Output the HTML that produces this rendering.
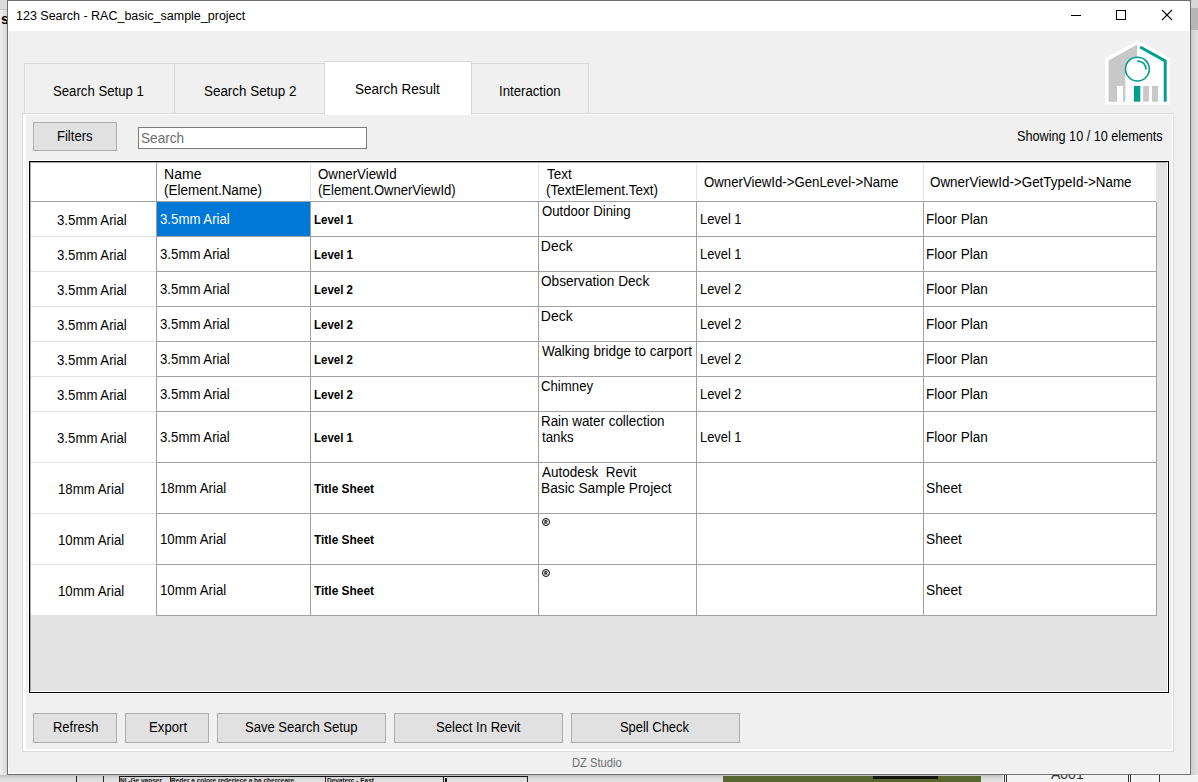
<!DOCTYPE html>
<html><head><meta charset="utf-8"><style>
*{margin:0;padding:0;box-sizing:border-box}
html,body{width:1198px;height:782px;overflow:hidden;background:#e6e6e6;font-family:"Liberation Sans",sans-serif;color:#000}
.a{position:absolute}
.t{position:absolute;white-space:pre;transform-origin:0 0}
.btn{position:absolute;background:#e1e1e1;border:1px solid #adadad}
</style></head><body>

<div class="a" style="left:0;top:0;width:7px;height:9px;background:#dcdcdc"></div>
<div class="a" style="left:0;top:9px;width:7px;height:1px;background:#c4c4c4"></div>
<div class="a" style="left:0;top:10px;width:7px;height:765px;background:linear-gradient(to right,#f0f0f0,#d8d8d8)"></div>
<div class="t" style="left:1px;top:11px;font-weight:bold;font-size:14px;line-height:16px">s</div>
<div class="a" style="left:1191px;top:0;width:7px;height:8px;background:#d8d8d8"></div>
<div class="a" style="left:1191px;top:8px;width:7px;height:22px;background:#b6b6b6"></div>
<div class="a" style="left:1191px;top:30px;width:7px;height:752px;background:linear-gradient(to right,#cccccc,#d4d4d4 30%,#e2e2e2)"></div>
<div class="a" style="left:0;top:775px;width:1198px;height:7px;background:linear-gradient(to bottom,#c0c0c0,#d8d8d8 40%,#e4e4e4)"></div>
<div class="a" style="left:723px;top:776px;width:258px;height:6px;background:#58672f"></div>
<div class="a" style="left:873px;top:776px;width:65px;height:3px;background:#151510"></div>
<div class="a" style="left:76px;top:776px;width:1px;height:6px;background:#222"></div>
<div class="a" style="left:103px;top:776px;width:1px;height:6px;background:#222"></div>
<div class="a" style="left:119px;top:776px;width:1px;height:6px;background:#222"></div>
<div class="a" style="left:170px;top:776px;width:1px;height:6px;background:#222"></div>
<div class="a" style="left:325px;top:776px;width:1px;height:6px;background:#222"></div>
<div class="a" style="left:443px;top:776px;width:1px;height:6px;background:#222"></div>
<div class="a" style="left:527px;top:776px;width:1px;height:6px;background:#222"></div>
<div class="a" style="left:119px;top:776px;width:409px;height:1px;background:#111"></div>
<div class="a" style="left:445px;top:778px;width:2px;height:4px;background:#111"></div>
<div class="t" style="left:120px;top:777px;font-size:6.5px;line-height:7px;font-weight:bold;color:#111">Nl -Ge vanser</div>
<div class="t" style="left:171px;top:777px;font-size:6.5px;line-height:7px;font-weight:bold;color:#111">Reder a colore rederiece a ba cherceare.</div>
<div class="t" style="left:327px;top:777px;font-size:6.5px;line-height:7px;font-weight:bold;color:#111">Devaterc - East</div>
<div class="a" style="left:1003px;top:775px;width:195px;height:7px;background:#f4f4f4"></div>
<div class="a" style="left:1004px;top:775px;width:1px;height:7px;background:#333"></div>
<div class="a" style="left:1006px;top:775px;width:1px;height:7px;background:#333"></div>
<div class="a" style="left:1128px;top:775px;width:1px;height:7px;background:#333"></div>
<div class="a" style="left:1130px;top:775px;width:1px;height:7px;background:#333"></div>
<div class="a" style="left:1159px;top:775px;width:1px;height:7px;background:#333"></div>
<div class="t" style="left:1051px;top:766px;font-size:14px;line-height:16px;color:#333">A001</div>
<div class="a" style="left:7px;top:0;width:1184px;height:775px;border:1px solid #6e6e6e;background:#f8f8f8"></div>
<div class="a" style="left:9px;top:31px;width:1180px;height:742px;background:#f0f0f0"></div>
<div class="a" style="left:8px;top:1px;width:1182px;height:30px;background:#fff"></div>
<div class="a" style="left:1071px;top:15px;width:10px;height:1px;background:#000"></div>
<div class="a" style="left:1116px;top:10px;width:10px;height:10px;border:1px solid #000"></div>
<svg class="a" style="left:1161px;top:9px" width="12" height="12" viewBox="0 0 12 12"><path d="M1 1L11 11M11 1L1 11" stroke="#000" stroke-width="1.1"/></svg>
<svg class="a" style="left:1100px;top:36px" width="75" height="75" viewBox="0 0 75 75">
<polygon points="38,4.3 69.8,22 69.8,68.6 5.3,68.6 5.3,22" fill="#fff"/>
<path d="M8.6,24.4 L37,8.4 L37,24 L25.4,36 L25.4,65.7 L8.6,65.7 Z" fill="#c8c8c8"/>
<rect x="17" y="49.9" width="6" height="15.8" fill="#fff"/>
<circle cx="37.4" cy="33.1" r="11.9" fill="#fff" stroke="#00a08f" stroke-width="1.6"/>
<path d="M37.9,25.1 A8,8 0 0 1 46,33.1" fill="none" stroke="#00a08f" stroke-width="1.6" stroke-linecap="round"/>
<path d="M40.1,11 L65.2,24.9 L65.2,65.7" fill="none" stroke="#00a08f" stroke-width="3"/>
<rect x="34" y="49.9" width="6.3" height="15.8" fill="#00a08f"/>
<rect x="43.1" y="49.9" width="5.8" height="15.8" fill="#c8c8c8"/>
<rect x="52" y="49.9" width="6" height="15.8" fill="#c8c8c8"/>
</svg>
<div class="a" style="left:22px;top:113px;width:1152px;height:639px;border:1px solid #dadada;background:#fff"></div>
<div class="a" style="left:26px;top:115px;width:1146px;height:634px;background:#f0f0f0"></div>
<div class="a" style="left:24px;top:63px;width:151px;height:50px;border:1px solid #d9d9d9;border-bottom:none;background:#f0f0f0"></div>
<div class="a" style="left:174px;top:63px;width:151px;height:50px;border:1px solid #d9d9d9;border-bottom:none;background:#f0f0f0"></div>
<div class="a" style="left:471px;top:63px;width:118px;height:50px;border:1px solid #d9d9d9;border-bottom:none;background:#f0f0f0"></div>
<div class="a" style="left:324px;top:61px;width:148px;height:54px;border:1px solid #d9d9d9;border-bottom:none;background:#fff"></div>
<div class="btn" style="left:33px;top:122px;width:84px;height:29px"></div>
<div class="a" style="left:138px;top:127px;width:229px;height:22px;border:1px solid #7a7a7a;background:#fff"></div>
<div class="a" style="left:28px;top:160px;width:1142px;height:534px;background:#fff"></div>
<div class="a" style="left:29px;top:161px;width:1140px;height:532px;border:1px solid #000;background:#fff"></div>
<div class="a" style="left:30px;top:162px;width:1137px;height:529px;background:#e3e3e3"></div>
<div class="a" style="left:30px;top:162px;width:1126px;height:453px;background:#fff"></div>
<div class="a" style="left:30px;top:201px;width:1126px;height:1px;background:#a0a0a0"></div>
<div class="a" style="left:156px;top:162px;width:1px;height:39px;background:#a0a0a0"></div>
<div class="a" style="left:310px;top:164px;width:1px;height:36px;background:#e3e3e3"></div>
<div class="a" style="left:538px;top:164px;width:1px;height:36px;background:#e3e3e3"></div>
<div class="a" style="left:696px;top:164px;width:1px;height:36px;background:#e3e3e3"></div>
<div class="a" style="left:923px;top:164px;width:1px;height:36px;background:#e3e3e3"></div>
<div class="a" style="left:1156px;top:164px;width:1px;height:36px;background:#e3e3e3"></div>
<div class="a" style="left:156px;top:202px;width:1px;height:414px;background:#a0a0a0"></div>
<div class="a" style="left:310px;top:202px;width:1px;height:414px;background:#a0a0a0"></div>
<div class="a" style="left:538px;top:202px;width:1px;height:414px;background:#a0a0a0"></div>
<div class="a" style="left:696px;top:202px;width:1px;height:414px;background:#a0a0a0"></div>
<div class="a" style="left:923px;top:202px;width:1px;height:414px;background:#a0a0a0"></div>
<div class="a" style="left:1156px;top:202px;width:1px;height:414px;background:#a0a0a0"></div>
<div class="a" style="left:30px;top:236px;width:126px;height:1px;background:#e3e3e3"></div>
<div class="a" style="left:157px;top:236px;width:1000px;height:1px;background:#a0a0a0"></div>
<div class="a" style="left:30px;top:271px;width:126px;height:1px;background:#e3e3e3"></div>
<div class="a" style="left:157px;top:271px;width:1000px;height:1px;background:#a0a0a0"></div>
<div class="a" style="left:30px;top:306px;width:126px;height:1px;background:#e3e3e3"></div>
<div class="a" style="left:157px;top:306px;width:1000px;height:1px;background:#a0a0a0"></div>
<div class="a" style="left:30px;top:341px;width:126px;height:1px;background:#e3e3e3"></div>
<div class="a" style="left:157px;top:341px;width:1000px;height:1px;background:#a0a0a0"></div>
<div class="a" style="left:30px;top:376px;width:126px;height:1px;background:#e3e3e3"></div>
<div class="a" style="left:157px;top:376px;width:1000px;height:1px;background:#a0a0a0"></div>
<div class="a" style="left:30px;top:411px;width:126px;height:1px;background:#e3e3e3"></div>
<div class="a" style="left:157px;top:411px;width:1000px;height:1px;background:#a0a0a0"></div>
<div class="a" style="left:30px;top:462px;width:126px;height:1px;background:#e3e3e3"></div>
<div class="a" style="left:157px;top:462px;width:1000px;height:1px;background:#a0a0a0"></div>
<div class="a" style="left:30px;top:513px;width:126px;height:1px;background:#e3e3e3"></div>
<div class="a" style="left:157px;top:513px;width:1000px;height:1px;background:#a0a0a0"></div>
<div class="a" style="left:30px;top:564px;width:126px;height:1px;background:#e3e3e3"></div>
<div class="a" style="left:157px;top:564px;width:1000px;height:1px;background:#a0a0a0"></div>
<div class="a" style="left:30px;top:615px;width:126px;height:1px;background:#e3e3e3"></div>
<div class="a" style="left:157px;top:615px;width:1000px;height:1px;background:#a0a0a0"></div>
<div class="a" style="left:157px;top:202px;width:153px;height:34px;background:#0078d7"></div>
<div class="a" style="left:30px;top:162px;width:1px;height:529px;background:#a8a8a8"></div>
<div class="a" style="left:30px;top:162px;width:1137px;height:1px;background:#a8a8a8"></div>
<div class="btn" style="left:33px;top:713px;width:84px;height:30px"></div>
<div class="btn" style="left:125px;top:713px;width:84px;height:30px"></div>
<div class="btn" style="left:217px;top:713px;width:169px;height:30px"></div>
<div class="btn" style="left:394px;top:713px;width:169px;height:30px"></div>
<div class="btn" style="left:571px;top:713px;width:169px;height:30px"></div>
<div class="t" style="left:16.00px;top:8px;font-size:12.5px;line-height:16px;font-weight:normal;color:#000;transform:scaleX(1.0000)">123 Search - RAC_basic_sample_project</div>
<div class="t" style="left:53.36px;top:83px;font-size:14px;line-height:16px;font-weight:normal;color:#000;transform:scaleX(0.9416)">Search Setup 1</div>
<div class="t" style="left:204.04px;top:83px;font-size:14px;line-height:16px;font-weight:normal;color:#000;transform:scaleX(0.9579)">Search Setup 2</div>
<div class="t" style="left:355.34px;top:81px;font-size:14px;line-height:16px;font-weight:normal;color:#000;transform:scaleX(0.9644)">Search Result</div>
<div class="t" style="left:499.36px;top:83px;font-size:14px;line-height:16px;font-weight:normal;color:#000;transform:scaleX(0.9422)">Interaction</div>
<div class="t" style="left:56.77px;top:128px;font-size:14px;line-height:16px;font-weight:normal;color:#000;transform:scaleX(0.9324)">Filters</div>
<div class="t" style="left:140.53px;top:130px;font-size:14px;line-height:16px;font-weight:normal;color:#6d6d6d;transform:scaleX(0.9721)">Search</div>
<div class="t" style="left:1017.40px;top:128px;font-size:14px;line-height:16px;font-weight:normal;color:#000;transform:scaleX(0.9044)">Showing 10 / 10 elements</div>
<div class="t" style="left:163.50px;top:166px;font-size:14px;line-height:16px;font-weight:normal;color:#000;transform:scaleX(1.0028)">Name</div>
<div class="t" style="left:163.54px;top:182px;font-size:14px;line-height:16px;font-weight:normal;color:#000;transform:scaleX(0.9620)">(Element.Name)</div>
<div class="t" style="left:317.75px;top:166px;font-size:14px;line-height:16px;font-weight:normal;color:#000;transform:scaleX(0.9481)">OwnerViewId</div>
<div class="t" style="left:317.77px;top:182px;font-size:14px;line-height:16px;font-weight:normal;color:#000;transform:scaleX(0.9329)">(Element.OwnerViewId)</div>
<div class="t" style="left:547.30px;top:166px;font-size:14px;line-height:16px;font-weight:normal;color:#000;transform:scaleX(0.9615)">Text</div>
<div class="t" style="left:546.33px;top:182px;font-size:14px;line-height:16px;font-weight:normal;color:#000;transform:scaleX(0.9667)">(TextElement.Text)</div>
<div class="t" style="left:703.81px;top:174px;font-size:14px;line-height:16px;font-weight:normal;color:#000;transform:scaleX(0.9441)">OwnerViewId-&gt;GenLevel-&gt;Name</div>
<div class="t" style="left:930.04px;top:174px;font-size:14px;line-height:16px;font-weight:normal;color:#000;transform:scaleX(0.9569)">OwnerViewId-&gt;GetTypeId-&gt;Name</div>
<div class="t" style="left:57.46px;top:212px;font-size:14px;line-height:16px;font-weight:normal;color:#000;transform:scaleX(0.9444)">3.5mm Arial</div>
<div class="t" style="left:160.06px;top:211px;font-size:14px;line-height:16px;font-weight:normal;color:#fff;transform:scaleX(0.9444)">3.5mm Arial</div>
<div class="t" style="left:313.88px;top:212px;font-size:12.5px;line-height:16px;font-weight:bold;color:#000;transform:scaleX(0.9171)">Level 1</div>
<div class="t" style="left:541.86px;top:203px;font-size:14px;line-height:16px;font-weight:normal;color:#000;transform:scaleX(0.9403)">Outdoor Dining</div>
<div class="t" style="left:699.78px;top:211px;font-size:14px;line-height:16px;font-weight:normal;color:#000;transform:scaleX(0.9182)">Level 1</div>
<div class="t" style="left:926.33px;top:211px;font-size:14px;line-height:16px;font-weight:normal;color:#000;transform:scaleX(0.9677)">Floor Plan</div>
<div class="t" style="left:57.46px;top:247px;font-size:14px;line-height:16px;font-weight:normal;color:#000;transform:scaleX(0.9444)">3.5mm Arial</div>
<div class="t" style="left:160.06px;top:246px;font-size:14px;line-height:16px;font-weight:normal;color:#000;transform:scaleX(0.9444)">3.5mm Arial</div>
<div class="t" style="left:313.88px;top:247px;font-size:12.5px;line-height:16px;font-weight:bold;color:#000;transform:scaleX(0.9171)">Level 1</div>
<div class="t" style="left:540.80px;top:238px;font-size:14px;line-height:16px;font-weight:normal;color:#000;transform:scaleX(1.0000)">Deck</div>
<div class="t" style="left:699.78px;top:246px;font-size:14px;line-height:16px;font-weight:normal;color:#000;transform:scaleX(0.9182)">Level 1</div>
<div class="t" style="left:926.33px;top:246px;font-size:14px;line-height:16px;font-weight:normal;color:#000;transform:scaleX(0.9677)">Floor Plan</div>
<div class="t" style="left:57.46px;top:282px;font-size:14px;line-height:16px;font-weight:normal;color:#000;transform:scaleX(0.9444)">3.5mm Arial</div>
<div class="t" style="left:160.06px;top:281px;font-size:14px;line-height:16px;font-weight:normal;color:#000;transform:scaleX(0.9444)">3.5mm Arial</div>
<div class="t" style="left:313.88px;top:282px;font-size:12.5px;line-height:16px;font-weight:bold;color:#000;transform:scaleX(0.9171)">Level 2</div>
<div class="t" style="left:540.83px;top:273px;font-size:14px;line-height:16px;font-weight:normal;color:#000;transform:scaleX(0.9727)">Observation Deck</div>
<div class="t" style="left:699.78px;top:281px;font-size:14px;line-height:16px;font-weight:normal;color:#000;transform:scaleX(0.9182)">Level 2</div>
<div class="t" style="left:926.33px;top:281px;font-size:14px;line-height:16px;font-weight:normal;color:#000;transform:scaleX(0.9677)">Floor Plan</div>
<div class="t" style="left:57.46px;top:317px;font-size:14px;line-height:16px;font-weight:normal;color:#000;transform:scaleX(0.9444)">3.5mm Arial</div>
<div class="t" style="left:160.06px;top:316px;font-size:14px;line-height:16px;font-weight:normal;color:#000;transform:scaleX(0.9444)">3.5mm Arial</div>
<div class="t" style="left:313.88px;top:317px;font-size:12.5px;line-height:16px;font-weight:bold;color:#000;transform:scaleX(0.9171)">Level 2</div>
<div class="t" style="left:540.80px;top:308px;font-size:14px;line-height:16px;font-weight:normal;color:#000;transform:scaleX(1.0000)">Deck</div>
<div class="t" style="left:699.78px;top:316px;font-size:14px;line-height:16px;font-weight:normal;color:#000;transform:scaleX(0.9182)">Level 2</div>
<div class="t" style="left:926.33px;top:316px;font-size:14px;line-height:16px;font-weight:normal;color:#000;transform:scaleX(0.9677)">Floor Plan</div>
<div class="t" style="left:57.46px;top:352px;font-size:14px;line-height:16px;font-weight:normal;color:#000;transform:scaleX(0.9444)">3.5mm Arial</div>
<div class="t" style="left:160.06px;top:351px;font-size:14px;line-height:16px;font-weight:normal;color:#000;transform:scaleX(0.9444)">3.5mm Arial</div>
<div class="t" style="left:313.88px;top:352px;font-size:12.5px;line-height:16px;font-weight:bold;color:#000;transform:scaleX(0.9171)">Level 2</div>
<div class="t" style="left:541.80px;top:343px;font-size:14px;line-height:16px;font-weight:normal;color:#000;transform:scaleX(0.9665)">Walking bridge to carport</div>
<div class="t" style="left:699.78px;top:351px;font-size:14px;line-height:16px;font-weight:normal;color:#000;transform:scaleX(0.9182)">Level 2</div>
<div class="t" style="left:926.33px;top:351px;font-size:14px;line-height:16px;font-weight:normal;color:#000;transform:scaleX(0.9677)">Floor Plan</div>
<div class="t" style="left:57.46px;top:387px;font-size:14px;line-height:16px;font-weight:normal;color:#000;transform:scaleX(0.9444)">3.5mm Arial</div>
<div class="t" style="left:160.06px;top:386px;font-size:14px;line-height:16px;font-weight:normal;color:#000;transform:scaleX(0.9444)">3.5mm Arial</div>
<div class="t" style="left:313.88px;top:387px;font-size:12.5px;line-height:16px;font-weight:bold;color:#000;transform:scaleX(0.9171)">Level 2</div>
<div class="t" style="left:540.86px;top:378px;font-size:14px;line-height:16px;font-weight:normal;color:#000;transform:scaleX(0.9426)">Chimney</div>
<div class="t" style="left:699.78px;top:386px;font-size:14px;line-height:16px;font-weight:normal;color:#000;transform:scaleX(0.9182)">Level 2</div>
<div class="t" style="left:926.33px;top:386px;font-size:14px;line-height:16px;font-weight:normal;color:#000;transform:scaleX(0.9677)">Floor Plan</div>
<div class="t" style="left:57.46px;top:430px;font-size:14px;line-height:16px;font-weight:normal;color:#000;transform:scaleX(0.9444)">3.5mm Arial</div>
<div class="t" style="left:160.06px;top:429px;font-size:14px;line-height:16px;font-weight:normal;color:#000;transform:scaleX(0.9444)">3.5mm Arial</div>
<div class="t" style="left:313.88px;top:430px;font-size:12.5px;line-height:16px;font-weight:bold;color:#000;transform:scaleX(0.9171)">Level 1</div>
<div class="t" style="left:540.84px;top:413px;font-size:14px;line-height:16px;font-weight:normal;color:#000;transform:scaleX(0.9563)">Rain water collection</div>
<div class="t" style="left:541.80px;top:429px;font-size:14px;line-height:16px;font-weight:normal;color:#000;transform:scaleX(0.9455)">tanks</div>
<div class="t" style="left:699.78px;top:429px;font-size:14px;line-height:16px;font-weight:normal;color:#000;transform:scaleX(0.9182)">Level 1</div>
<div class="t" style="left:926.33px;top:429px;font-size:14px;line-height:16px;font-weight:normal;color:#000;transform:scaleX(0.9677)">Floor Plan</div>
<div class="t" style="left:58.25px;top:481px;font-size:14px;line-height:16px;font-weight:normal;color:#000;transform:scaleX(0.9456)">18mm Arial</div>
<div class="t" style="left:160.05px;top:480px;font-size:14px;line-height:16px;font-weight:normal;color:#000;transform:scaleX(0.9456)">18mm Arial</div>
<div class="t" style="left:314.20px;top:481px;font-size:12.5px;line-height:16px;font-weight:bold;color:#000;transform:scaleX(0.9524)">Title Sheet</div>
<div class="t" style="left:541.80px;top:464px;font-size:14px;line-height:16px;font-weight:normal;color:#000;transform:scaleX(0.9633)">Autodesk&nbsp; Revit</div>
<div class="t" style="left:540.82px;top:480px;font-size:14px;line-height:16px;font-weight:normal;color:#000;transform:scaleX(0.9818)">Basic Sample Project</div>
<div class="t" style="left:926.32px;top:480px;font-size:14px;line-height:16px;font-weight:normal;color:#000;transform:scaleX(0.9806)">Sheet</div>
<div class="t" style="left:58.25px;top:532px;font-size:14px;line-height:16px;font-weight:normal;color:#000;transform:scaleX(0.9456)">10mm Arial</div>
<div class="t" style="left:160.05px;top:531px;font-size:14px;line-height:16px;font-weight:normal;color:#000;transform:scaleX(0.9456)">10mm Arial</div>
<div class="t" style="left:314.20px;top:532px;font-size:12.5px;line-height:16px;font-weight:bold;color:#000;transform:scaleX(0.9524)">Title Sheet</div>
<div class="t" style="left:926.32px;top:531px;font-size:14px;line-height:16px;font-weight:normal;color:#000;transform:scaleX(0.9806)">Sheet</div>
<div class="t" style="left:58.25px;top:583px;font-size:14px;line-height:16px;font-weight:normal;color:#000;transform:scaleX(0.9456)">10mm Arial</div>
<div class="t" style="left:160.05px;top:582px;font-size:14px;line-height:16px;font-weight:normal;color:#000;transform:scaleX(0.9456)">10mm Arial</div>
<div class="t" style="left:314.20px;top:583px;font-size:12.5px;line-height:16px;font-weight:bold;color:#000;transform:scaleX(0.9524)">Title Sheet</div>
<div class="t" style="left:926.32px;top:582px;font-size:14px;line-height:16px;font-weight:normal;color:#000;transform:scaleX(0.9806)">Sheet</div>
<div class="t" style="left:52.82px;top:719px;font-size:14px;line-height:16px;font-weight:normal;color:#000;transform:scaleX(0.9255)">Refresh</div>
<div class="t" style="left:148.76px;top:719px;font-size:14px;line-height:16px;font-weight:normal;color:#000;transform:scaleX(0.9436)">Export</div>
<div class="t" style="left:245.37px;top:719px;font-size:14px;line-height:16px;font-weight:normal;color:#000;transform:scaleX(0.9319)">Save Search Setup</div>
<div class="t" style="left:436.36px;top:719px;font-size:14px;line-height:16px;font-weight:normal;color:#000;transform:scaleX(0.9360)">Select In Revit</div>
<div class="t" style="left:620.38px;top:719px;font-size:14px;line-height:16px;font-weight:normal;color:#000;transform:scaleX(0.9230)">Spell Check</div>
<div class="t" style="left:571.77px;top:755px;font-size:12px;line-height:16px;font-weight:normal;color:#6d6d6d;transform:scaleX(0.9308)">DZ Studio</div>
<svg class="a" style="left:542px;top:518px" width="8" height="8" viewBox="0 0 8 8"><circle cx="4" cy="4" r="3.5" fill="none" stroke="#000" stroke-width="1"/><path d="M2.9,6V2.4H4.3A0.85,0.85 0 0 1 4.3,4.1H2.9M4.1,4.1L5.2,6" fill="none" stroke="#000" stroke-width="0.9"/></svg>
<svg class="a" style="left:542px;top:569px" width="8" height="8" viewBox="0 0 8 8"><circle cx="4" cy="4" r="3.5" fill="none" stroke="#000" stroke-width="1"/><path d="M2.9,6V2.4H4.3A0.85,0.85 0 0 1 4.3,4.1H2.9M4.1,4.1L5.2,6" fill="none" stroke="#000" stroke-width="0.9"/></svg>
</body></html>
